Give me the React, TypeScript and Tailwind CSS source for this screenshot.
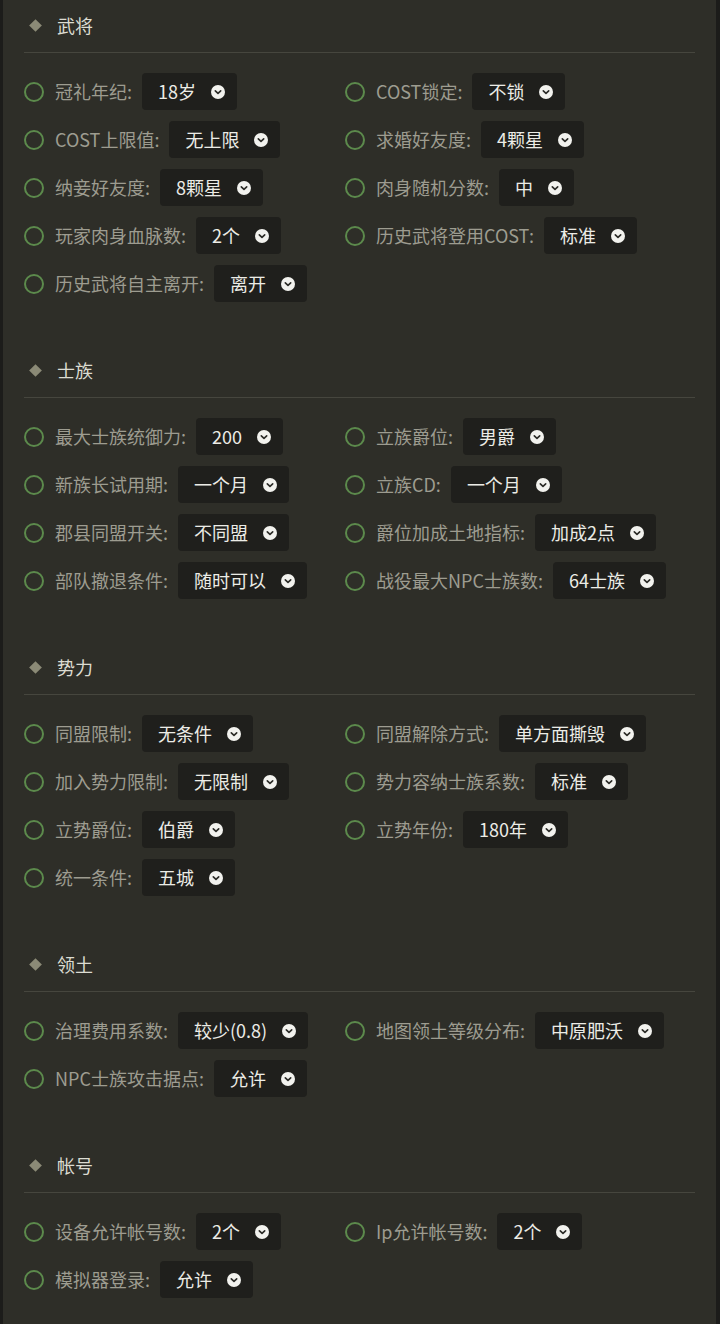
type Option = {
  label: string;
  value: string;
};

type Section = {
  title: string;
  items: Option[];
};

const sections: Section[] = [
  {
    title: "武将",
    items: [
      { label: "冠礼年纪:", value: "18岁" },
      { label: "COST锁定:", value: "不锁" },
      { label: "COST上限值:", value: "无上限" },
      { label: "求婚好友度:", value: "4颗星" },
      { label: "纳妾好友度:", value: "8颗星" },
      { label: "肉身随机分数:", value: "中" },
      { label: "玩家肉身血脉数:", value: "2个" },
      { label: "历史武将登用COST:", value: "标准" },
      { label: "历史武将自主离开:", value: "离开" },
    ],
  },
  {
    title: "士族",
    items: [
      { label: "最大士族统御力:", value: "200" },
      { label: "立族爵位:", value: "男爵" },
      { label: "新族长试用期:", value: "一个月" },
      { label: "立族CD:", value: "一个月" },
      { label: "郡县同盟开关:", value: "不同盟" },
      { label: "爵位加成土地指标:", value: "加成2点" },
      { label: "部队撤退条件:", value: "随时可以" },
      { label: "战役最大NPC士族数:", value: "64士族" },
    ],
  },
  {
    title: "势力",
    items: [
      { label: "同盟限制:", value: "无条件" },
      { label: "同盟解除方式:", value: "单方面撕毁" },
      { label: "加入势力限制:", value: "无限制" },
      { label: "势力容纳士族系数:", value: "标准" },
      { label: "立势爵位:", value: "伯爵" },
      { label: "立势年份:", value: "180年" },
      { label: "统一条件:", value: "五城" },
    ],
  },
  {
    title: "领土",
    items: [
      { label: "治理费用系数:", value: "较少(0.8)" },
      { label: "地图领土等级分布:", value: "中原肥沃" },
      { label: "NPC士族攻击据点:", value: "允许" },
    ],
  },
  {
    title: "帐号",
    items: [
      { label: "设备允许帐号数:", value: "2个" },
      { label: "Ip允许帐号数:", value: "2个" },
      { label: "模拟器登录:", value: "允许" },
    ],
  },
];

const Chevron = () => (
  <svg className="w-[14px] h-[14px] shrink-0" viewBox="0 0 14 14">
    <circle cx="7" cy="7" r="7" fill="#f2f2ee" />
    <path
      d="M4.3 5.8L7 8.4l2.7-2.6"
      fill="none"
      stroke="#2a2a26"
      strokeWidth="1.6"
      strokeLinecap="round"
      strokeLinejoin="round"
    />
  </svg>
);

const Row = ({ label, value }: Option) => (
  <div className="flex items-center h-[37px]">
    <span className="w-[20px] h-[20px] rounded-full border-2 border-[#5c8a4c] shrink-0" />
    <span className="ml-[11px] text-[18px] text-[#9d9c90] whitespace-nowrap">
      {label}
    </span>
    <div className="ml-[10px] h-[37px] flex items-center pl-4 pr-3 rounded bg-[#1f1f1c]">
      <span className="text-[18px] text-[#ecece6] whitespace-nowrap">
        {value}
      </span>
      <span className="ml-[15px]">
        <Chevron />
      </span>
    </div>
  </div>
);

const SettingsSection = ({ title, items }: Section) => (
  <div>
    <div className="flex items-center h-6 pl-[7px]">
      <span className="w-[9px] h-[9px] rotate-45 bg-[#8b8a76]" />
      <span className="ml-[17px] text-[18px] text-[#dcdcd2]">{title}</span>
    </div>
    <div className="mt-[15px] border-t border-[#46463e]" />
    <div className="pt-[20px] grid grid-cols-[321px_1fr] gap-y-[11px]">
      {items.map((item, index) => (
        <Row key={index} label={item.label} value={item.value} />
      ))}
    </div>
  </div>
);

export default function App() {
  return (
    <div
      className="min-h-screen bg-[#2e2e28] border-l-[3px] border-r-[4px] border-[#1c1c1a]"
      style={{ fontFamily: '"Noto Sans CJK SC", "Noto Sans", sans-serif' }}
    >
      <div className="px-[21px] pt-[13px] pb-[26px] flex flex-col gap-[56px]">
        {sections.map((section) => (
          <SettingsSection
            key={section.title}
            title={section.title}
            items={section.items}
          />
        ))}
      </div>
    </div>
  );
}
